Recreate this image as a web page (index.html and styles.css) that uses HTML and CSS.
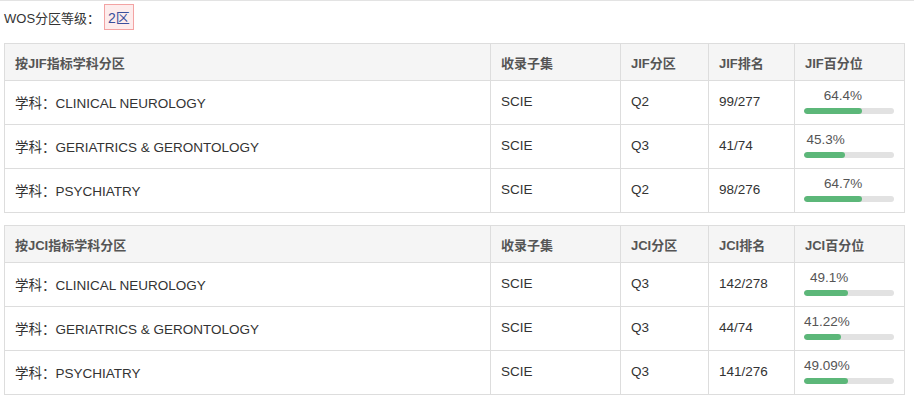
FILE: index.html
```html
<!DOCTYPE html>
<html lang="zh-CN">
<head>
<meta charset="utf-8">
<title>WOS分区</title>
<link rel="stylesheet" href="styles.css">
</head>
<body>
<div class="page">
  <div class="level">
    <span class="level-label">WOS分区等级：</span>
    <span class="badge">2区</span>
  </div>

  <table class="zone-table">
    <colgroup>
      <col class="c1"><col class="c2"><col class="c3"><col class="c4"><col class="c5">
    </colgroup>
    <thead>
      <tr><th>按JIF指标学科分区</th><th>收录子集</th><th>JIF分区</th><th>JIF排名</th><th>JIF百分位</th></tr>
    </thead>
    <tbody>
      <tr><td>学科：CLINICAL NEUROLOGY</td><td>SCIE</td><td>Q2</td><td>99/277</td>
        <td class="pct"><div class="pct-label" style="width:64.4%">64.4%</div><div class="bar"><div class="fill" style="width:64.4%"></div></div></td></tr>
      <tr><td>学科：GERIATRICS &amp; GERONTOLOGY</td><td>SCIE</td><td>Q3</td><td>41/74</td>
        <td class="pct"><div class="pct-label" style="width:45.3%">45.3%</div><div class="bar"><div class="fill" style="width:45.3%"></div></div></td></tr>
      <tr><td>学科：PSYCHIATRY</td><td>SCIE</td><td>Q2</td><td>98/276</td>
        <td class="pct"><div class="pct-label" style="width:64.7%">64.7%</div><div class="bar"><div class="fill" style="width:64.7%"></div></div></td></tr>
    </tbody>
  </table>

  <table class="zone-table">
    <colgroup>
      <col class="c1"><col class="c2"><col class="c3"><col class="c4"><col class="c5">
    </colgroup>
    <thead>
      <tr><th>按JCI指标学科分区</th><th>收录子集</th><th>JCI分区</th><th>JCI排名</th><th>JCI百分位</th></tr>
    </thead>
    <tbody>
      <tr><td>学科：CLINICAL NEUROLOGY</td><td>SCIE</td><td>Q3</td><td>142/278</td>
        <td class="pct"><div class="pct-label" style="width:49.1%">49.1%</div><div class="bar"><div class="fill" style="width:49.1%"></div></div></td></tr>
      <tr><td>学科：GERIATRICS &amp; GERONTOLOGY</td><td>SCIE</td><td>Q3</td><td>44/74</td>
        <td class="pct"><div class="pct-label" style="width:41.22%">41.22%</div><div class="bar"><div class="fill" style="width:41.22%"></div></div></td></tr>
      <tr><td>学科：PSYCHIATRY</td><td>SCIE</td><td>Q3</td><td>141/276</td>
        <td class="pct"><div class="pct-label" style="width:49.09%">49.09%</div><div class="bar"><div class="fill" style="width:49.09%"></div></div></td></tr>
    </tbody>
  </table>
</div>
</body>
</html>
```

FILE: styles.css
```css
html, body {
  margin: 0;
  padding: 0;
  background: #fff;
}
body {
  font-family: "Liberation Sans", "Noto Sans CJK SC", sans-serif;
  font-size: 13.5px;
  color: #333;
}
.page {
  border-top: 1px solid #e3e3e3;
  padding: 3px 10px 0 4px;
}
.level {
  display: flex;
  align-items: center;
  height: 26px;
  font-size: 13px;
}
.level-label {
  color: #333;
  margin-right: 4px;
}
.badge {
  display: inline-flex;
  align-items: center;
  height: 24px;
  padding: 0 3px;
  border: 1px solid #f3a3a3;
  background: #fdecec;
  color: #3a4f9c;
  font-size: 14px;
}
.zone-table {
  width: 900px;
  border-collapse: collapse;
  table-layout: fixed;
  margin-top: 13px;
}
.zone-table + .zone-table {
  margin-top: 12px;
}
.c1 { width: 486px; }
.c2 { width: 130px; }
.c3 { width: 88px; }
.c4 { width: 86px; }
.c5 { width: 110px; }
.zone-table th,
.zone-table td {
  border: 1px solid #ddd;
  padding: 0 10px;
  text-align: left;
  vertical-align: middle;
  box-sizing: border-box;
}
.zone-table th {
  height: 37px;
  background: #f5f5f5;
  color: #555;
  font-weight: bold;
  font-size: 13px;
}
.zone-table td {
  height: 44px;
  color: #333;
  padding-bottom: 2px;
}
.zone-table td.pct {
  vertical-align: top;
  padding: 6px 10px 0 9px;
}
.pct-label {
  text-align: right;
  white-space: nowrap;
  min-width: max-content;
  color: #555;
  line-height: 17px;
}
.bar {
  margin-top: 4px;
  height: 6px;
  border-radius: 3px;
  background: #e2e2e2;
  overflow: hidden;
}
.fill {
  height: 100%;
  border-radius: 3px;
  background: #5cb779;
}
```
